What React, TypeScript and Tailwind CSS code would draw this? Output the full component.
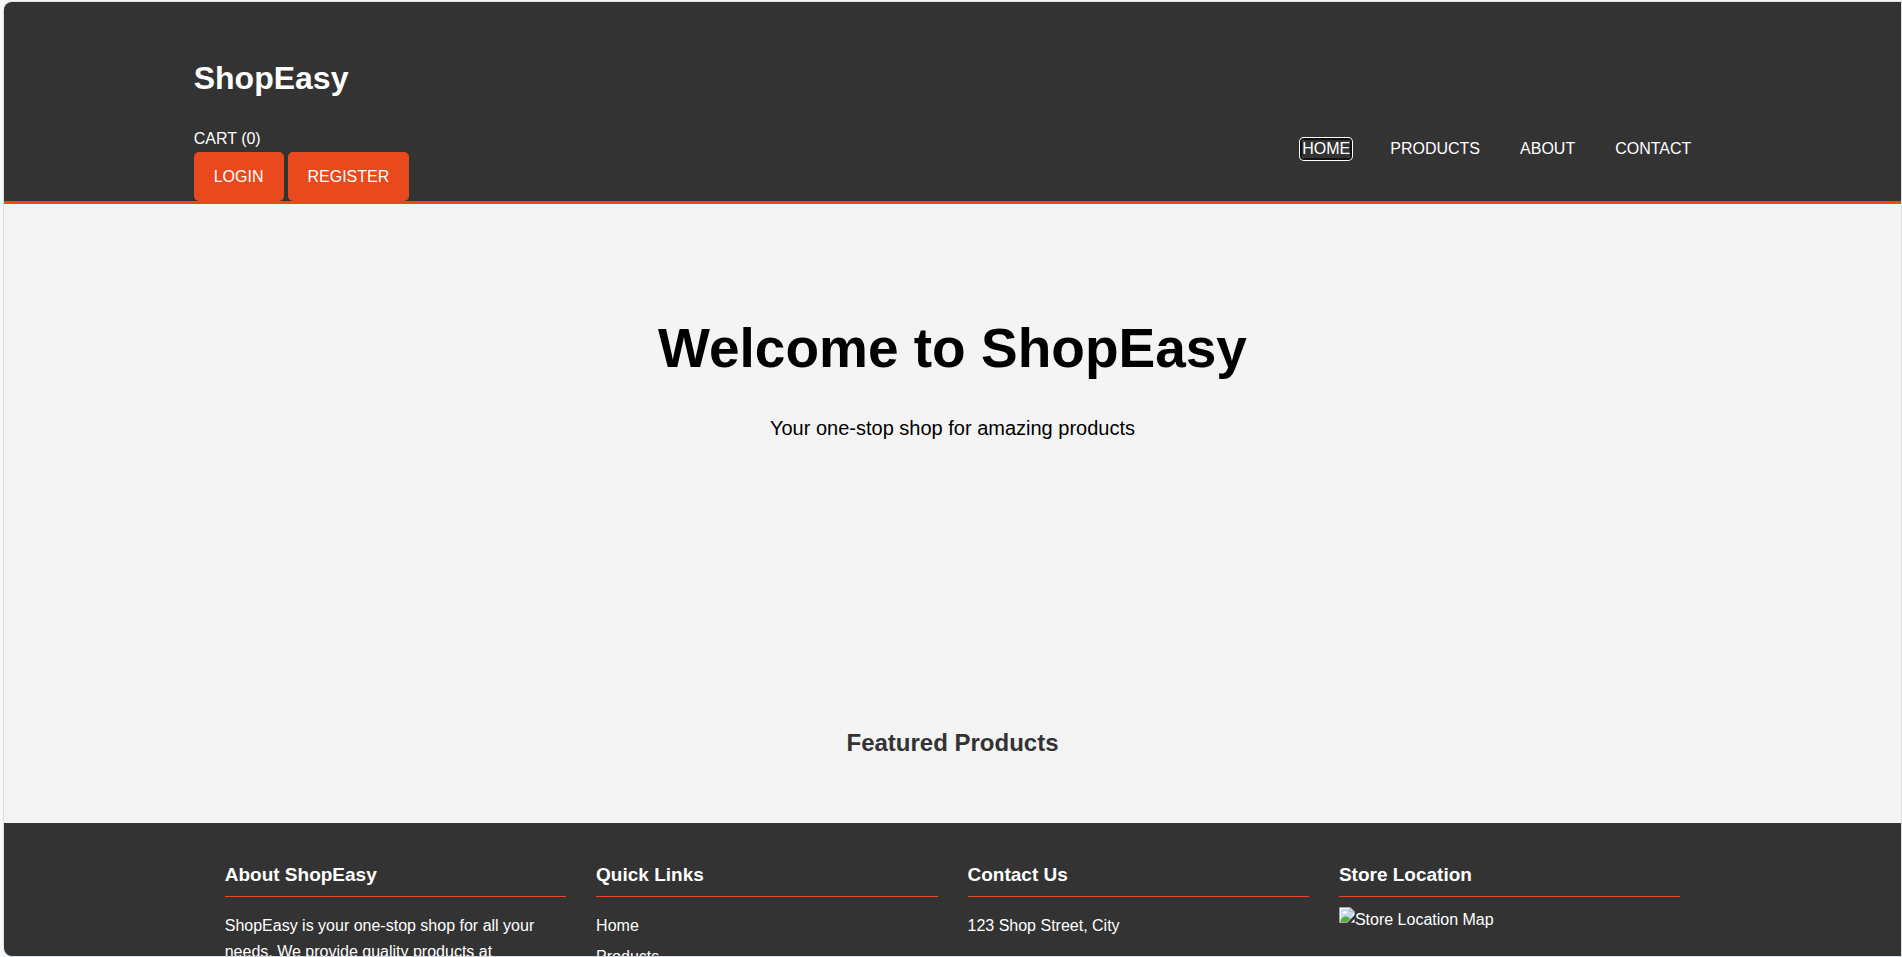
import type { ReactNode } from "react";

const navLinks = ["Products", "About", "Contact"];

function BrokenImageIcon() {
  return (
    <svg width="16" height="16" viewBox="0 0 16 16" className="shrink-0" aria-hidden="true">
      <path d="M0.5 0.5H11L15.5 5V15.5H0.5Z" fill="#fff" stroke="#a3a3a3" />
      <path d="M2 2H10.5V6H14V14H2Z" fill="#c3d6f5" />
      <path d="M3 6.5Q3 5 4.5 5Q5 3.5 6.5 4Q8 4 8 5.5Q9 6 8.5 6.5Z" fill="#fff" />
      <path d="M1.5 15V13Q5 8.5 8 9.5Q10 10.5 12 12L9 15Z" fill="#56ad3b" />
      <path d="M11 0.5V5H15.5Z" fill="#e8e8e8" stroke="#a3a3a3" />
      <path d="M16 7.5L8 16H11.5L16 11.5Z" fill="#333" />
      <path d="M15 8L8.5 15" stroke="#fff" strokeWidth="0.5" />
    </svg>
  );
}

function FooterColumn({ title, children }: { title: string; children: ReactNode }) {
  return (
    <section>
      <h3 className="border-b border-[#e8491d] pb-1.5 text-[19px] leading-[30px] font-bold">{title}</h3>
      {children}
    </section>
  );
}

export default function App() {
  return (
    <div className="h-screen overflow-hidden bg-[#f6f8fa] pt-0.5 pr-px pb-px pl-1 font-['Liberation_Sans',Arial,sans-serif] text-base leading-[26px] text-black">
      <div className="h-full overflow-hidden rounded-l-lg bg-[#f4f4f4] shadow-[0_0_0_1px_#dcdfe3]">
        <header className="border-b-3 border-[#e8491d] bg-[#333] text-white uppercase">
          <div className="mx-auto flex w-4/5 items-end justify-between pt-[51px]">
            <div>
              <h1 className="mb-[22px] text-[32px] leading-[51px] font-bold normal-case">ShopEasy</h1>
              <a href="#cart" className="block">Cart (0)</a>
              <div className="flex gap-1">
                <button type="button" className="h-[49px] rounded-[5px] bg-[#e8491d] px-5 uppercase">Login</button>
                <button type="button" className="h-[49px] rounded-[5px] bg-[#e8491d] px-5 uppercase">Register</button>
              </div>
            </div>
            <nav className="flex gap-10 px-5 pb-[43px] leading-[18px]">
              <a href="#home" className="rounded-xs shadow-[0_0_0_2px_#101010,0_0_0_3px_#fff]">Home</a>
              {navLinks.map((label) => (
                <a key={label} href={`#${label.toLowerCase()}`}>{label}</a>
              ))}
            </nav>
          </div>
        </header>

        <main className="text-center">
          <section className="h-[476px] pt-[100px]">
            <h2 className="text-[55px] leading-[88px] font-bold">Welcome to ShopEasy</h2>
            <p className="mt-5 text-xl leading-8">Your one-stop shop for amazing products</p>
          </section>
          <section className="h-[143px] pt-11">
            <h2 className="text-2xl leading-[38px] font-bold text-[#333]">Featured Products</h2>
          </section>
        </main>

        <footer className="bg-[#333] py-[37px] text-white">
          <div className="mx-auto grid w-4/5 grid-cols-4 gap-[30px] px-[31px]">
            <FooterColumn title="About ShopEasy">
              <p className="mt-4">ShopEasy is your one-stop shop for all your needs. We provide quality products at</p>
            </FooterColumn>
            <FooterColumn title="Quick Links">
              <ul className="mt-4 space-y-[5px]">
                <li><a href="#home">Home</a></li>
                <li><a href="#products">Products</a></li>
              </ul>
            </FooterColumn>
            <FooterColumn title="Contact Us">
              <p className="mt-4">123 Shop Street, City</p>
            </FooterColumn>
            <FooterColumn title="Store Location">
              <div className="mt-2.5 flex items-start">
                <BrokenImageIcon />
                <span>Store Location Map</span>
              </div>
            </FooterColumn>
          </div>
        </footer>
      </div>
    </div>
  );
}
